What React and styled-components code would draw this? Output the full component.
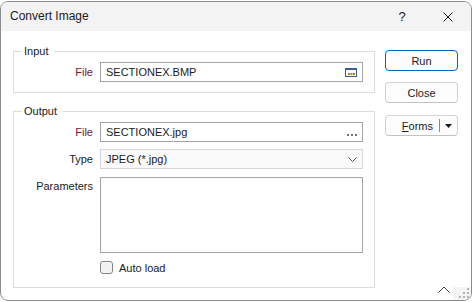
import React from "react";
import styled, { createGlobalStyle } from "styled-components";

const Global = createGlobalStyle`
  html, body { margin: 0; padding: 0; background: #ffffff; }
  body { font-family: "Liberation Sans", Arial, sans-serif; font-size: 11px; color: #1b1b1b; }
  * { box-sizing: border-box; }
`;

const Window = styled.div`
  position: relative;
  margin-top: 1px;
  width: 472px;
  height: 300px;
  border: 1px solid #8c8c8c;
  border-radius: 8px;
  background: #ffffff;
  overflow: hidden;
  display: flex;
  flex-direction: column;
`;

const TitleBar = styled.div`
  height: 29px;
  flex: 0 0 29px;
  background: #f3f3f3;
  display: flex;
  align-items: center;
`;

const Title = styled.div`
  flex: 1;
  padding-left: 9px;
  font-size: 12px;
  color: #1a1a1a;
  padding-bottom: 2px;
`;

const CaptionButton = styled.div`
  width: 46px;
  height: 29px;
  display: flex;
  align-items: center;
  justify-content: center;
  font-size: 13px;
  color: #1a1a1a;
`;

const Body = styled.div`
  flex: 1;
  display: flex;
  align-items: flex-start;
  padding: 14px 13px 0 12px;
  gap: 10px;
`;

const LeftColumn = styled.div`
  width: 362px;
  display: flex;
  flex-direction: column;
  gap: 12px;
`;

const Group = styled.fieldset`
  margin: 0;
  padding: 0;
  border: 1px solid #dcdcdc;
  min-width: 0;
`;

const Legend = styled.legend`
  margin-left: 8px;
  padding: 0 6px 0 2px;
  font-size: 11px;
  line-height: 12px;
  color: #1b1b1b;
`;

const GroupInner = styled.div`
  padding: ${(p) => p.$pad};
  display: flex;
  flex-direction: column;
`;

const Row = styled.div`
  display: grid;
  grid-template-columns: 79px 1fr;
  column-gap: 7px;
  align-items: ${(p) => (p.$top ? "start" : "center")};
  margin-top: ${(p) => p.$mt || 0}px;
`;

const Label = styled.div`
  text-align: right;
  color: ${(p) => (p.$required ? "#7d1230" : "#1b1b1b")};
  padding-top: ${(p) => (p.$top ? "3px" : "0")};
  white-space: nowrap;
`;

const Field = styled.div`
  height: 20px;
  border: 1px solid ${(p) => (p.$combo ? "#d6d6d6" : "#a3a3aa")};
  background: ${(p) => (p.$combo ? "#fafafa" : "#ffffff")};
  display: flex;
  align-items: center;
  padding: 0 5px 0 5px;
  color: #1b1b1b;
`;

const FieldText = styled.span`
  flex: 1;
  padding-bottom: 1px;
`;

const TextArea = styled.div`
  height: 76px;
  border: 1px solid #a3a3aa;
  background: #ffffff;
`;

const CheckRow = styled.label`
  display: flex;
  align-items: center;
  gap: 6px;
  height: 13px;
`;

const CheckBox = styled.span`
  width: 13px;
  height: 13px;
  border: 1px solid #858585;
  border-radius: 3px;
  background: #f3f3f3;
`;

const RightColumn = styled.div`
  width: 73px;
  margin-top: 5px;
  display: flex;
  flex-direction: column;
`;

const Button = styled.div`
  height: 21px;
  margin-top: ${(p) => p.$mt || 0}px;
  border: 1px solid ${(p) => (p.$primary ? "#0067c0" : "#d3d3d3")};
  border-bottom-color: ${(p) => (p.$primary ? "#0067c0" : "#c2c2c2")};
  border-radius: 4px;
  background: #fdfdfd;
  display: flex;
  align-items: center;
  justify-content: ${(p) => (p.$split ? "flex-end" : "center")};
  padding-right: ${(p) => (p.$split ? "5px" : "0")};
  color: #1b1b1b;
`;

const Underline = styled.span`
  text-decoration: underline;
`;

const SplitSep = styled.span`
  width: 1px;
  height: 13px;
  background: #8a8a8a;
  margin: 0 5px 0 6px;
`;

const Chevron = styled.div`
  position: absolute;
  right: 21px;
  bottom: 7px;
  width: 12px;
  height: 7px;
  display: flex;
`;

const Grip = styled.div`
  position: absolute;
  right: 0;
  bottom: 0;
  width: 18px;
  height: 13px;
  background: #f4f4f4;
  display: flex;
  align-items: flex-end;
  justify-content: flex-end;
  padding: 0 2px 2px 0;
`;

function BrowseIcon() {
  return (
    <svg width="12" height="9" viewBox="0 0 12 9">
      <rect x="0.5" y="0.5" width="11" height="8" fill="#fff" stroke="#3b5f8c" />
      <rect x="0" y="0" width="12" height="2" fill="#3b5f8c" />
      <rect x="3" y="5" width="2" height="2" fill="#b07a26" />
      <rect x="5.5" y="5" width="2" height="2" fill="#b07a26" />
      <rect x="8" y="5" width="2" height="2" fill="#b07a26" />
    </svg>
  );
}

function Dots() {
  return (
    <svg width="11" height="6" viewBox="0 0 11 6" style={{ marginTop: 4 }}>
      <rect x="1" y="3" width="2" height="2" fill="#707070" />
      <rect x="5" y="3" width="2" height="2" fill="#707070" />
      <rect x="9" y="3" width="2" height="2" fill="#707070" />
    </svg>
  );
}

function ComboArrow() {
  return (
    <svg width="9" height="5" viewBox="0 0 9 5">
      <polyline points="0.5,0.5 4.5,4.5 8.5,0.5" fill="none" stroke="#5a5a5a" strokeWidth="1" />
    </svg>
  );
}

function CloseGlyph() {
  return (
    <svg width="10" height="10" viewBox="0 0 10 10">
      <path d="M0.5 0.5 L9.5 9.5 M9.5 0.5 L0.5 9.5" stroke="#1a1a1a" strokeWidth="1" />
    </svg>
  );
}

function DropTriangle() {
  return (
    <svg width="7" height="4" viewBox="0 0 7 4">
      <polygon points="0,0 7,0 3.5,4" fill="#1a1a1a" />
    </svg>
  );
}

function GripDots() {
  const pts = [
    [8, 0], [4, 4], [8, 4], [0, 8], [4, 8], [8, 8],
  ];
  return (
    <svg width="10" height="10" viewBox="0 0 10 10">
      {pts.map(([x, y], i) => (
        <rect key={i} x={x} y={y} width="2" height="2" fill="#b4b4b4" />
      ))}
    </svg>
  );
}

export default function App() {
  return (
    <>
      <Global />
      <Window>
        <TitleBar>
          <Title>Convert Image</Title>
          <CaptionButton>?</CaptionButton>
          <CaptionButton>
            <CloseGlyph />
          </CaptionButton>
        </TitleBar>
        <Body>
          <LeftColumn>
            <Group>
              <Legend>Input</Legend>
              <GroupInner $pad="5px 11px 10px 0">
                <Row>
                  <Label $required>File</Label>
                  <Field>
                    <FieldText>SECTIONEX.BMP</FieldText>
                    <BrowseIcon />
                  </Field>
                </Row>
              </GroupInner>
            </Group>
            <Group>
              <Legend>Output</Legend>
              <GroupInner $pad="5px 11px 13px 0">
                <Row>
                  <Label $required>File</Label>
                  <Field>
                    <FieldText>SECTIONEX.jpg</FieldText>
                    <Dots />
                  </Field>
                </Row>
                <Row $mt={7}>
                  <Label>Type</Label>
                  <Field $combo>
                    <FieldText>JPEG (*.jpg)</FieldText>
                    <ComboArrow />
                  </Field>
                </Row>
                <Row $mt={8} $top>
                  <Label $top>Parameters</Label>
                  <TextArea />
                </Row>
                <Row $mt={8}>
                  <span />
                  <CheckRow>
                    <CheckBox />
                    <span>Auto load</span>
                  </CheckRow>
                </Row>
              </GroupInner>
            </Group>
          </LeftColumn>
          <RightColumn>
            <Button $primary>Run</Button>
            <Button $mt={11}>Close</Button>
            <Button $mt={12} $split>
              <span>
                <Underline>F</Underline>orms
              </span>
              <SplitSep />
              <DropTriangle />
            </Button>
          </RightColumn>
        </Body>
        <Chevron>
          <svg width="12" height="7" viewBox="0 0 12 7">
            <polyline points="0.5,6.5 6,1 11.5,6.5" fill="none" stroke="#444" strokeWidth="1" />
          </svg>
        </Chevron>
        <Grip>
          <GripDots />
        </Grip>
      </Window>
    </>
  );
}
